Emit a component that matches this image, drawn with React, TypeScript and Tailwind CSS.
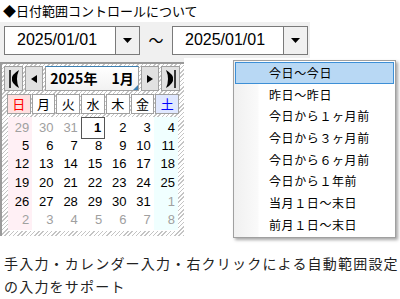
import React from "react";

const jp = { fontFamily: '"Noto Sans CJK JP", "Noto Sans", sans-serif' };
const num = { fontFamily: '"Liberation Sans Narrow", "Liberation Sans", sans-serif' };

const weeks: { d: number; other?: boolean }[][] = [
  [{ d: 29, other: true }, { d: 30, other: true }, { d: 31, other: true }, { d: 1 }, { d: 2 }, { d: 3 }, { d: 4 }],
  [5, 6, 7, 8, 9, 10, 11].map((d) => ({ d })),
  [12, 13, 14, 15, 16, 17, 18].map((d) => ({ d })),
  [19, 20, 21, 22, 23, 24, 25].map((d) => ({ d })),
  [{ d: 26 }, { d: 27 }, { d: 28 }, { d: 29 }, { d: 30 }, { d: 31 }, { d: 1, other: true }],
  [2, 3, 4, 5, 6, 7, 8].map((d) => ({ d, other: true })),
];

const menu = [
  "今日～今日",
  "昨日～昨日",
  "今日から１ヶ月前",
  "今日から３ヶ月前",
  "今日から６ヶ月前",
  "今日から１年前",
  "当月１日～末日",
  "前月１日～末日",
];

function DateCombo() {
  return (
    <div className="flex h-[29px] w-[136px] border border-[#7a7a7a] bg-white">
      <div className="flex flex-1 items-center pl-[12px] text-[16px] text-black" style={{ fontFamily: '"Liberation Sans", sans-serif' }}>
        2025/01/01
      </div>
      <div className="flex w-[24px] items-center justify-center border-l border-[#7a7a7a] bg-[#f0f0f0]">
        <svg width="9" height="5" viewBox="0 0 9 5">
          <path d="M0 0 H9 L4.5 5 Z" fill="#000" />
        </svg>
      </div>
    </div>
  );
}

function NavButton({ children, w }: { children: React.ReactNode; w: string }) {
  return (
    <div className={`flex h-[25px] ${w} items-center justify-center border border-[#a0a0a0] bg-[#e1e1e1]`}>
      {children}
    </div>
  );
}

export default function App() {
  return (
    <div className="relative h-[299px] w-[400px] overflow-hidden bg-white text-black" style={jp}>
      <p className="h-[22px] pl-[3px] pt-[3px] text-[13px] leading-[16px]">◆日付範囲コントロールについて</p>

      {/* combo row */}
      <div className="flex h-[36px] w-[310px] items-center bg-[#f0f0f0] pl-[4px]">
        <DateCombo />
        <span className="w-[32px] text-center text-[15px]">～</span>
        <DateCombo />
      </div>

      {/* calendar */}
      <div className="w-[184px] bg-[#f0f0f0] pt-[4px]">
        <div className="border-l-2 border-t-2 border-[#9a9a9a] bg-[repeating-linear-gradient(135deg,#c4c4c4_0_1px,#ffffff_1px_3px)] px-[2px] pb-[5px] pt-[2px]">
          <div className="flex items-center gap-[2px]">
            <NavButton w="w-[19px]">
              <svg width="12" height="20" viewBox="0 0 12 20">
                <path d="M2 1 V19" stroke="#000" strokeWidth="1.5" />
                <path d="M11 1 Q3 6 4 10 Q3 14 11 19 Q7 10 11 1 Z" fill="#000" />
              </svg>
            </NavButton>
            <NavButton w="w-[18px]">
              <svg width="6" height="8" viewBox="0 0 6 8">
                <path d="M6 0 V8 L0 4 Z" fill="#000" />
              </svg>
            </NavButton>
            <div className="relative flex h-[25px] w-[94px] items-center justify-center border border-[#a0a0a0] border-t-[#3c7fb1] bg-[linear-gradient(#ffffff,#f2f2f2)] text-[14px] font-bold">
              2025年　1月
              <div className="absolute bottom-0 right-0 h-0 w-0 border-b-[5px] border-l-[5px] border-b-[#3c7fb1] border-l-transparent" />
            </div>
            <NavButton w="w-[18px]">
              <svg width="6" height="8" viewBox="0 0 6 8">
                <path d="M0 0 V8 L6 4 Z" fill="#000" />
              </svg>
            </NavButton>
            <NavButton w="w-[19px]">
              <svg width="12" height="20" viewBox="0 0 12 20">
                <path d="M10 1 V19" stroke="#000" strokeWidth="1.5" />
                <path d="M1 1 Q9 6 8 10 Q9 14 1 19 Q5 10 1 1 Z" fill="#000" />
              </svg>
            </NavButton>
          </div>

          <div className="mt-[3px] grid grid-cols-7 gap-[1px] px-[3px]">
            {["日", "月", "火", "水", "木", "金", "土"].map((w, i) => (
              <div
                key={w}
                className={`flex h-[20px] items-center justify-center border border-[#a0a0a0] text-[13px] ${
                  i === 0 ? "bg-[#ffe0e0] text-[#ff0000]" : i === 6 ? "bg-[#e0e8ff] text-[#0000ff]" : "bg-white"
                }`}
              >
                {w}
              </div>
            ))}
          </div>

          <div className="mx-[4px] mt-[3px] bg-white pb-[2px]" style={num}>
            {weeks.map((row, r) => (
              <div key={r} className="grid h-[18.7px] grid-cols-7">
                {row.map((c, i) => (
                  <div
                    key={i}
                    className={`flex items-center justify-end pr-[3px] text-[13px] ${
                      i === 0 ? "bg-[#fff0f5]" : i === 6 ? "bg-[#f0ffff]" : ""
                    } ${c.other ? "text-[#a0a0a0]" : "text-black"} ${
                      r === 0 && i === 3 ? "border border-[#555] font-bold" : ""
                    }`}
                  >
                    {c.d}
                  </div>
                ))}
              </div>
            ))}
          </div>
        </div>
      </div>

      <div className="mt-[16px] whitespace-nowrap pl-[4px] text-[14px] leading-[23px] tracking-[1.2px] text-[#222]">
        <p>手入力・カレンダー入力・右クリックによる自動範囲設定</p>
        <p>の入力をサポート</p>
      </div>

      {/* context menu */}
      <div className="absolute left-[233px] top-[60px] w-[163px] border border-[#a0a0a0] bg-[linear-gradient(90deg,#f0f0f0_0,#fafafa_24px,#ffffff_25px)] p-[1px] shadow-[2px_2px_3px_rgba(0,0,0,0.35)]">
        {menu.map((m, i) => (
          <div
            key={m}
            className={`flex h-[21.7px] items-center pl-[33px] text-[12px] tracking-[0.6px] ${
              i === 0 ? "border border-[#3d8fd6] bg-[#b8d8f4]" : "border border-transparent"
            }`}
          >
            {m}
          </div>
        ))}
      </div>
    </div>
  );
}
